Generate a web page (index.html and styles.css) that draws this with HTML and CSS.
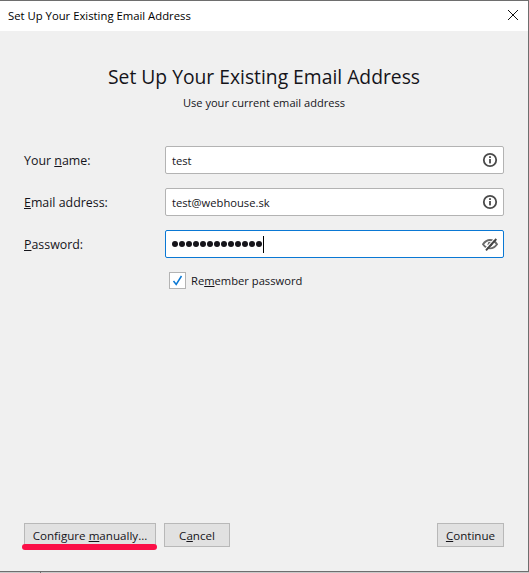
FILE: index.html
```html
<!DOCTYPE html>
<html lang="en">
<head>
    <meta charset="UTF-8">
    <title>Set Up Your Existing Email Address</title>
    <link rel="stylesheet" href="styles.css">
</head>
<body>

<div class="window">
    <div class="titlebar">
        <span class="title-text">Set Up Your Existing Email Address</span>
        <svg class="close-icon" width="12" height="12" viewBox="0 0 12 12">
            <path d="M1 1L11 11M11 1L1 11" stroke="#111" stroke-width="1" fill="none"/>
        </svg>
    </div>

    <div class="content">
        <h1>Set Up Your Existing Email Address</h1>
        <p class="subtitle">Use your current email address</p>

        <div class="form">
            <div class="row">
                <label class="label">Your <u>n</u>ame:</label>
                <div class="field">
                    <span class="value">test</span>
                    <svg class="field-icon" width="16" height="16" viewBox="0 0 16 16">
                        <circle cx="8" cy="8" r="6.2" stroke="#4a4a4a" stroke-width="1.8" fill="none"/>
                        <rect x="7.1" y="7" width="1.8" height="4.4" fill="#4a4a4a"/>
                        <rect x="7.1" y="4.2" width="1.8" height="1.8" fill="#4a4a4a"/>
                    </svg>
                </div>
            </div>
            <div class="row">
                <label class="label"><u>E</u>mail address:</label>
                <div class="field">
                    <span class="value">test@webhouse.sk</span>
                    <svg class="field-icon" width="16" height="16" viewBox="0 0 16 16">
                        <circle cx="8" cy="8" r="6.2" stroke="#4a4a4a" stroke-width="1.8" fill="none"/>
                        <rect x="7.1" y="7" width="1.8" height="4.4" fill="#4a4a4a"/>
                        <rect x="7.1" y="4.2" width="1.8" height="1.8" fill="#4a4a4a"/>
                    </svg>
                </div>
            </div>
            <div class="row">
                <label class="label"><u>P</u>assword:</label>
                <div class="field focused">
                    <span class="dots">
                        <i></i><i></i><i></i><i></i><i></i><i></i><i></i><i></i><i></i><i></i><i></i><i></i><i></i>
                    </span>
                    <span class="caret"></span>
                    <svg class="field-icon" width="16" height="16" viewBox="0 0 16 16">
                        <path d="M1 8.200C3 5.400 5.400 4 8 4S13 5.400 15 8.200C13 11 10.600 12.400 8 12.400S3 11 1 8.200Z" stroke="#6a6a6a" stroke-width="1.900" fill="none"/>
                        <circle cx="8" cy="8.200" r="2.400" fill="#6a6a6a"/>
                        <path d="M2.800 13.300L12.800 2.300" stroke="#ffffff" stroke-width="1.200"/>
                        <path d="M4 14.400L14.300 3" stroke="#444444" stroke-width="1.900"/>
                    </svg>
                </div>
            </div>
            <div class="remember">
                <span class="checkbox">
                    <svg width="13" height="13" viewBox="0 0 13 13">
                        <path d="M2.500 7L5.200 10.500L10.500 2" stroke="#0a78d4" stroke-width="1.500" fill="none"/>
                    </svg>
                </span>
                <span class="check-label">Re<u>m</u>ember password</span>
            </div>
        </div>
    </div>

    <div class="footer">
        <div class="manual-wrap">
            <button class="btn">Configure <u>m</u>anually...</button>
            <div class="red-mark"></div>
        </div>
        <button class="btn btn-cancel">C<u>a</u>ncel</button>
        <button class="btn btn-continue"><u>C</u>ontinue</button>
    </div>
</div>
<div class="desktop-tick"></div>

</body>
</html>
```

FILE: styles.css
```css
html, body {
    margin: 0;
    padding: 0;
}
body {
    position: relative;
    width: 529px;
    height: 573px;
    background-color: #c9c9c9;
    font-family: "Open Sans", "Noto Sans", sans-serif;
    font-size: 12px;
    color: #15141a;
    overflow: hidden;
}
.window {
    box-sizing: border-box;
    width: 529px;
    height: 572px;
    display: flex;
    flex-direction: column;
    border-top: 1px solid #6e6e6e;
    border-right: 1px solid #6e6e6e;
    border-bottom: 1px solid #6e6e6e;
    background-color: #f0f0f0;
}
.titlebar {
    box-sizing: border-box;
    height: 30px;
    flex: none;
    display: flex;
    align-items: center;
    justify-content: space-between;
    padding: 0 9px 2px 8px;
    background-color: #ffffff;
    color: #000;
    font-size: 11.300px;
}
.close-icon {
    display: block;
}
.content {
    flex: 1;
    padding: 0 24px;
}
h1 {
    margin: 33px 0 0;
    font-size: 19.300px;
    font-weight: 400;
    line-height: 26px;
    text-align: center;
}
.subtitle {
    margin: 5px 0 0;
    font-size: 11.100px;
    line-height: 16px;
    text-align: center;
}
.form {
    margin-top: 35px;
}
.row {
    display: flex;
    align-items: center;
    height: 28px;
    margin-bottom: 14px;
}
.label {
    width: 141px;
    flex: none;
    font-size: 12.400px;
}
.field {
    box-sizing: border-box;
    width: 339px;
    height: 28px;
    display: flex;
    align-items: center;
    padding: 0 5px 0 6px;
    background-color: #ffffff;
    border: 1px solid #b3b3b3;
    border-radius: 2px;
    font-size: 11.200px;
}
.field.focused {
    border-color: #0a78d4;
}
.value {
    flex: 1;
}
.field-icon {
    flex: none;
}
.dots {
    display: flex;
    gap: 1px;
}
.dots i {
    display: block;
    width: 6px;
    height: 6px;
    border-radius: 50%;
    background-color: #15141a;
}
.caret {
    width: 1px;
    height: 17px;
    margin-left: 1px;
    margin-right: auto;
    background-color: #000;
}
.remember {
    display: flex;
    align-items: center;
    margin: 3px 0 0 145px;
    gap: 5px;
}
.checkbox {
    box-sizing: border-box;
    width: 17px;
    height: 17px;
    display: flex;
    align-items: center;
    justify-content: center;
    background-color: #ffffff;
    border: 1px solid #b3b3b3;
}
.check-label {
    font-size: 11.200px;
}
.footer {
    display: flex;
    align-items: flex-start;
    gap: 8px;
    padding: 0 24px 24px;
}
.manual-wrap {
    position: relative;
}
.btn {
    box-sizing: border-box;
    display: block;
    height: 24px;
    padding: 0;
    background-color: #e1e1e1;
    border: 1px solid #b8b8b8;
    font-family: inherit;
    font-size: 11.600px;
    color: #15141a;
}
.manual-wrap .btn {
    width: 132px;
}
.btn-cancel {
    width: 66px;
}
.btn-continue {
    width: 67px;
    margin-left: auto;
}
.red-mark {
    position: absolute;
    left: -2px;
    top: 21px;
    width: 135px;
    height: 6px;
    border-radius: 3px;
    background-color: #fb0f47;
}
.desktop-tick {
    position: absolute;
    left: 40px;
    top: 572px;
    width: 1px;
    height: 1px;
    background-color: #6e6e6e;
}
```
